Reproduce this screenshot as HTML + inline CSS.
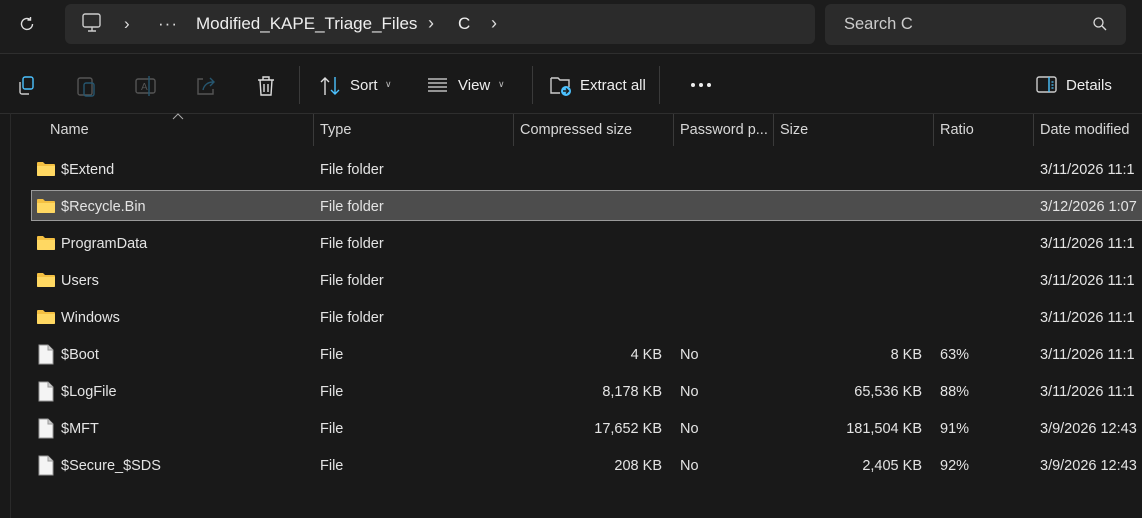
<!DOCTYPE html><html><head><style>
*{margin:0;padding:0;box-sizing:border-box}
body{width:1142px;height:518px;background:#191919;font-family:"Liberation Sans",sans-serif;color:#fff;position:relative;overflow:hidden;font-size:14px}
.a{position:absolute}
.top{left:0;top:0;width:1142px;height:54px;background:#1c1c1c;border-bottom:1px solid #2e2e2e}
.addr{left:65px;top:4px;width:750px;height:40px;background:#2b2b2b;border-radius:6px}
.search{left:825px;top:4px;width:301px;height:41px;background:#2b2b2b;border-radius:6px}
.t{white-space:nowrap}
.hdr{color:#d8d8d8;font-size:14.5px}
.vd{width:1px;background:#3a3a3a}
.row{font-size:14.5px;color:#e4e4e4}
</style></head><body>
<div class="a top"></div>
<svg class="a" style="left:17px;top:14px" width="20" height="20" viewBox="0 0 20 20"><path d="M15.5 10a5.5 5.5 0 1 1-2-4.3M13.5 3v3h-3" fill="none" stroke="#ddd" stroke-width="1.4"/></svg>
<div class="a addr"></div>
<svg class="a" style="left:81px;top:13px" width="22" height="20" viewBox="0 0 22 20"><rect x="2" y="1" width="17" height="13" rx="2" fill="none" stroke="#ccc" stroke-width="1.4"/><path d="M7 18h8M11 14v4" stroke="#ccc" stroke-width="1.4"/></svg>
<div class="a t" style="left:124px;top:14px;color:#ddd;font-size:17px">&#x203A;</div>
<div class="a t" style="left:158px;top:14px;color:#ddd;font-size:17px;letter-spacing:1px">···</div>
<div class="a t" style="left:196px;top:14px;font-size:17px;color:#eee">Modified_KAPE_Triage_Files</div>
<div class="a t" style="left:428px;top:13px;color:#ddd;font-size:18px">&#x203A;</div>
<div class="a t" style="left:458px;top:14px;font-size:17px;color:#eee">C</div>
<div class="a t" style="left:491px;top:13px;color:#ddd;font-size:18px">&#x203A;</div>
<div class="a search"></div>
<div class="a t" style="left:844px;top:15px;font-size:16.5px;color:#ccc">Search C</div>
<svg class="a" style="left:1092px;top:16px" width="16" height="16" viewBox="0 0 16 16"><circle cx="6.5" cy="6.5" r="4.5" fill="none" stroke="#ddd" stroke-width="1.3"/><path d="M10 10l4 4" stroke="#ddd" stroke-width="1.3"/></svg>
<!-- toolbar -->
<svg class="a" style="left:16px;top:75px" width="22" height="22" viewBox="0 0 22 22"><rect x="7" y="2" width="10" height="12" rx="2" fill="none" stroke="#4cc2ff" stroke-width="1.4"/><path d="M4 7v10a2 2 0 0 0 2 2h7" fill="none" stroke="#ccc" stroke-width="1.4"/></svg>
<svg class="a" style="left:76px;top:74px" width="22" height="24" viewBox="0 0 22 24"><rect x="2" y="4" width="14" height="17" rx="2" fill="none" stroke="#555" stroke-width="1.4"/><rect x="8" y="9" width="10" height="13" rx="2" fill="none" stroke="#26566f" stroke-width="1.4"/></svg>
<svg class="a" style="left:134px;top:74px" width="24" height="24" viewBox="0 0 24 24"><rect x="2" y="5" width="19" height="14" rx="2" fill="none" stroke="#555" stroke-width="1.4"/><text x="7" y="16" font-size="10" fill="#555" font-family="Liberation Sans">A</text><path d="M15 2v20" stroke="#26566f" stroke-width="1.4"/></svg>
<svg class="a" style="left:194px;top:74px" width="24" height="24" viewBox="0 0 24 24"><path d="M9 5H4v15h15v-5" fill="none" stroke="#555" stroke-width="1.4"/><path d="M9 16c1-5 5-8 10-8M16 4l4 4-4 4" fill="none" stroke="#26566f" stroke-width="1.4"/></svg>
<svg class="a" style="left:255px;top:74px" width="22" height="24" viewBox="0 0 22 24"><path d="M3 6h16M8 6V3h6v3M5 6l1 15h10l1-15M9 10v8M13 10v8" fill="none" stroke="#ddd" stroke-width="1.4"/></svg>
<div class="a vd" style="left:299px;top:66px;height:38px"></div>
<svg class="a" style="left:319px;top:75px" width="24" height="22" viewBox="0 0 24 22"><path d="M6 20V3M2 7l4-4 4 4" fill="none" stroke="#ddd" stroke-width="1.4"/><path d="M16 2v17M12 15l4 4 4-4" fill="none" stroke="#4cc2ff" stroke-width="1.4"/></svg>
<div class="a t" style="left:350px;top:77px;color:#eee;font-size:15px">Sort</div>
<div class="a t" style="left:385px;top:79px;color:#bbb;font-size:9px">&#x2228;</div>
<svg class="a" style="left:427px;top:77px" width="22" height="16" viewBox="0 0 22 16"><path d="M1 2h19M1 6h19M1 10h19M1 14h19" stroke="#ddd" stroke-width="1.2"/></svg>
<div class="a t" style="left:458px;top:77px;color:#eee;font-size:15px">View</div>
<div class="a t" style="left:498px;top:79px;color:#bbb;font-size:9px">&#x2228;</div>
<div class="a vd" style="left:532px;top:66px;height:38px"></div>
<svg class="a" style="left:549px;top:74px" width="24" height="24" viewBox="0 0 24 24"><path d="M2 4h7l2 2h9v7M2 4v15h9" fill="none" stroke="#ccc" stroke-width="1.4"/><circle cx="17" cy="17" r="5" fill="#4cc2ff"/><path d="M14 17h5M17 14.5l2.5 2.5-2.5 2.5" fill="none" stroke="#1c1c1c" stroke-width="1.4"/></svg>
<div class="a t" style="left:580px;top:77px;color:#eee;font-size:15px">Extract all</div>
<div class="a vd" style="left:659px;top:66px;height:38px"></div>
<svg class="a" style="left:690px;top:82px" width="24" height="6" viewBox="0 0 24 6"><circle cx="3" cy="3" r="2" fill="#eee"/><circle cx="11" cy="3" r="2" fill="#eee"/><circle cx="19" cy="3" r="2" fill="#eee"/></svg>
<svg class="a" style="left:1036px;top:76px" width="22" height="18" viewBox="0 0 22 18"><rect x="1" y="1" width="19" height="15" rx="2" fill="none" stroke="#ccc" stroke-width="1.4"/><path d="M13 1v15" stroke="#4cc2ff" stroke-width="1.4"/><path d="M15.5 6h2M15.5 9h2M15.5 12h2" stroke="#4cc2ff" stroke-width="1.2"/></svg>
<div class="a t" style="left:1066px;top:77px;color:#eee;font-size:15px">Details</div>
<!-- list -->
<div class="a" style="left:0;top:113px;width:1142px;height:1px;background:#2e2e2e"></div>
<div class="a vd" style="left:10px;top:113px;height:405px;background:#2a2a2a"></div>
<svg class="a" style="left:172px;top:113px" width="12" height="7" viewBox="0 0 12 7"><path d="M1 6l5-5 5 5" fill="none" stroke="#aaa" stroke-width="1"/></svg>
<div class="a t hdr" style="left:50px;top:122px">Name</div>
<div class="a vd" style="left:313px;top:114px;height:32px"></div><div class="a t hdr" style="left:320px;top:122px">Type</div>
<div class="a vd" style="left:513px;top:114px;height:32px"></div><div class="a t hdr" style="left:520px;top:122px">Compressed size</div>
<div class="a vd" style="left:673px;top:114px;height:32px"></div><div class="a t hdr" style="left:680px;top:122px">Password p...</div>
<div class="a vd" style="left:773px;top:114px;height:32px"></div><div class="a t hdr" style="left:780px;top:122px">Size</div>
<div class="a vd" style="left:933px;top:114px;height:32px"></div><div class="a t hdr" style="left:940px;top:122px">Ratio</div>
<div class="a vd" style="left:1033px;top:114px;height:32px"></div><div class="a t hdr" style="left:1040px;top:122px">Date modified</div>
<div class="a" style="left:31px;top:190px;width:1111px;height:31px;background:#4d4d4d;border:1px solid #9a9a9a;border-right:none"></div>
<div id="rows"></div>
<script>
var R=[["$Extend","File folder","","","","","3/11/2026 11:1",1],["$Recycle.Bin","File folder","","","","","3/12/2026 1:07",1],["ProgramData","File folder","","","","","3/11/2026 11:1",1],["Users","File folder","","","","","3/11/2026 11:1",1],["Windows","File folder","","","","","3/11/2026 11:1",1],["$Boot","File","4 KB","No","8 KB","63%","3/11/2026 11:1",0],["$LogFile","File","8,178 KB","No","65,536 KB","88%","3/11/2026 11:1",0],["$MFT","File","17,652 KB","No","181,504 KB","91%","3/9/2026 12:43",0],["$Secure_$SDS","File","208 KB","No","2,405 KB","92%","3/9/2026 12:43",0]];
var h="";R.forEach(function(r,i){var c=170+i*37,y=c-8;
var ic=r[7]?'<svg class="a" style="left:36px;top:'+(c-10)+'px" width="20" height="18" viewBox="0 0 20 18"><path d="M1 3a1 1 0 0 1 1-1h5l2 2h9a1 1 0 0 1 1 1v10a1 1 0 0 1-1 1H2a1 1 0 0 1-1-1z" fill="#f4c042"/><path d="M1 6h18v9a1 1 0 0 1-1 1H2a1 1 0 0 1-1-1z" fill="#ffd862"/></svg>':'<svg class="a" style="left:38px;top:'+(c-11)+'px" width="16" height="21" viewBox="0 0 16 21"><path d="M1 1h9l5 5v14H1z" fill="#f4f4f4" stroke="#999" stroke-width="1"/><path d="M10 1v5h5" fill="#ccc" stroke="#999" stroke-width="1"/></svg>';
h+=ic+'<div class="a t row" style="left:61px;top:'+y+'px">'+r[0]+'</div><div class="a t row" style="left:320px;top:'+y+'px">'+r[1]+'</div><div class="a t row" style="right:480px;top:'+y+'px">'+r[2]+'</div><div class="a t row" style="left:680px;top:'+y+'px">'+r[3]+'</div><div class="a t row" style="right:220px;top:'+y+'px">'+r[4]+'</div><div class="a t row" style="left:940px;top:'+y+'px">'+r[5]+'</div><div class="a t row" style="left:1040px;top:'+y+'px">'+r[6]+'</div>';});
document.getElementById("rows").innerHTML=h;
</script>
</body></html>
